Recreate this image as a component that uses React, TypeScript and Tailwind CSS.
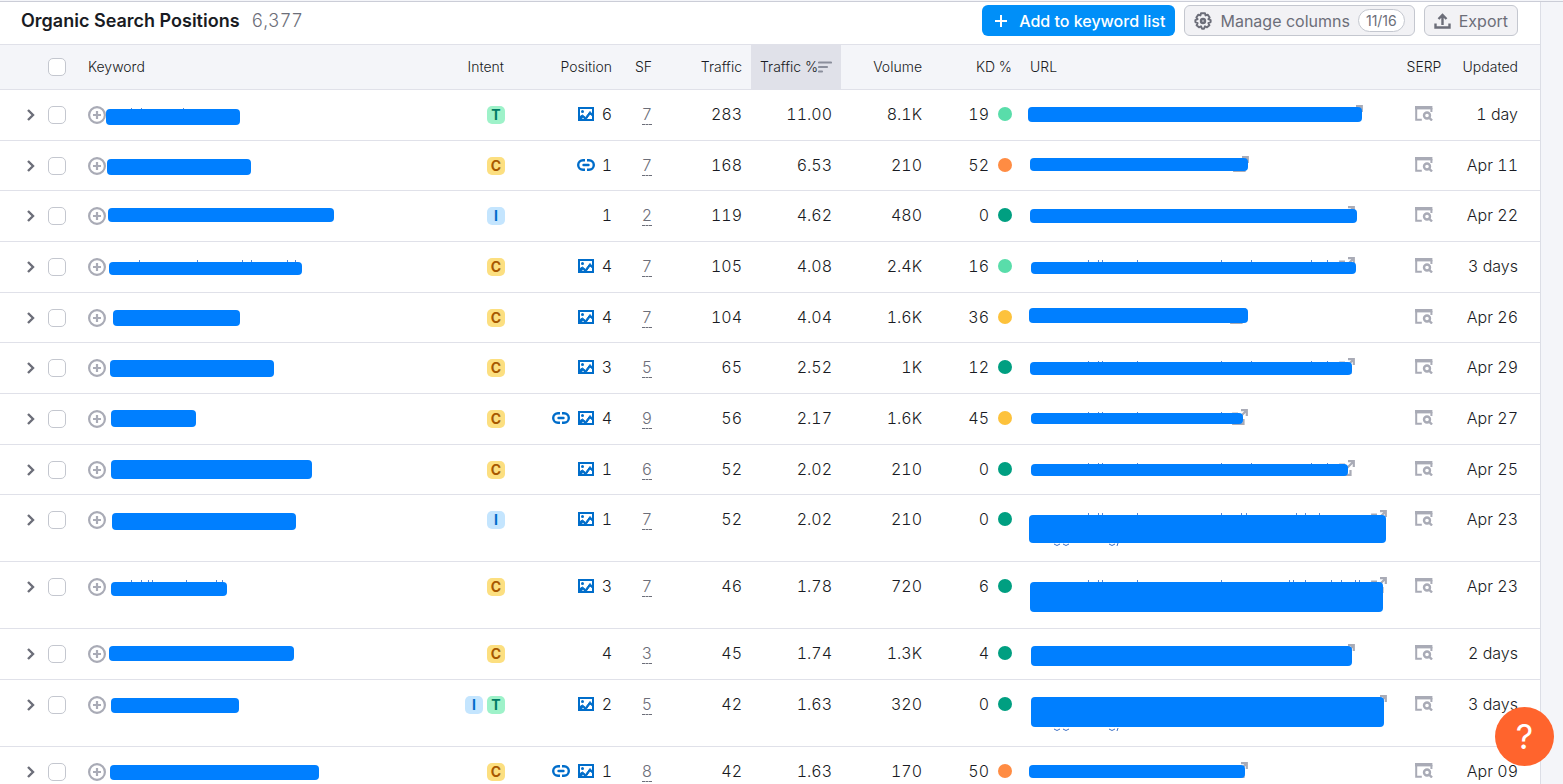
import { useState } from "react";
import clsx from "clsx";

type Intent = "T" | "C" | "I";
type PosIcon = "link" | "image";
type Level = "easy" | "veryEasy" | "possible" | "hard";

// x, y, width, height inside the cell
type Bar = [number, number, number, number];

type Row = {
  size: "sm" | "md" | "lg";
  intents: Intent[];
  icons: PosIcon[];
  position: number;
  sf: number;
  traffic: string;
  share: string;
  volume: string;
  kd: number;
  level: Level;
  updated: string;
  keywordBar: Bar;
  keywordMarks: number[];
  urlBar: Bar;
  urlWidth: number;
  urlMarks: number[];
  tail?: boolean;
};

const SHORT = [62, 72, 76, 111];
const LONG = [62, 72, 76, 111, 195, 225, 285, 301];

const ROWS: Row[] = [
  { size: "md", intents: ["T"], icons: ["image"], position: 6, sf: 7, traffic: "283", share: "11.00", volume: "8.1K", kd: 19, level: "easy", updated: "1 day", keywordBar: [18, 19, 134, 16], keywordMarks: [43, 53, 95], urlBar: [2, 17, 334, 15], urlWidth: 333, urlMarks: [] },
  { size: "sm", intents: ["C"], icons: ["link"], position: 1, sf: 7, traffic: "168", share: "6.53", volume: "210", kd: 52, level: "hard", updated: "Apr 11", keywordBar: [19, 18, 144, 16], keywordMarks: [43, 53, 61, 95], urlBar: [4, 17, 218, 13], urlWidth: 219, urlMarks: [...SHORT, 195] },
  { size: "md", intents: ["I"], icons: [], position: 1, sf: 2, traffic: "119", share: "4.62", volume: "480", kd: 0, level: "veryEasy", updated: "Apr 22", keywordBar: [20, 17, 226, 14], keywordMarks: [], urlBar: [4, 18, 327, 14], urlWidth: 325, urlMarks: LONG },
  { size: "md", intents: ["C"], icons: ["image"], position: 4, sf: 7, traffic: "105", share: "4.08", volume: "2.4K", kd: 16, level: "easy", updated: "3 days", keywordBar: [21, 20, 193, 13], keywordMarks: [51, 109, 154, 163, 199, 207], urlBar: [5, 20, 325, 12], urlWidth: 325, urlMarks: LONG },
  { size: "sm", intents: ["C"], icons: ["image"], position: 4, sf: 7, traffic: "104", share: "4.04", volume: "1.6K", kd: 36, level: "possible", updated: "Apr 26", keywordBar: [25, 17, 127, 16], keywordMarks: [], urlBar: [3, 15, 219, 15], urlWidth: 216, urlMarks: [] },
  { size: "md", intents: ["C"], icons: ["image"], position: 3, sf: 5, traffic: "65", share: "2.52", volume: "1K", kd: 12, level: "veryEasy", updated: "Apr 29", keywordBar: [22, 17, 164, 17], keywordMarks: [], urlBar: [4, 19, 322, 13], urlWidth: 325, urlMarks: LONG },
  { size: "md", intents: ["C"], icons: ["link", "image"], position: 4, sf: 9, traffic: "56", share: "2.17", volume: "1.6K", kd: 45, level: "possible", updated: "Apr 27", keywordBar: [23, 16, 85, 17], keywordMarks: [], urlBar: [5, 19, 212, 11], urlWidth: 218, urlMarks: [...SHORT, 195] },
  { size: "sm", intents: ["C"], icons: ["image"], position: 1, sf: 6, traffic: "52", share: "2.02", volume: "210", kd: 0, level: "veryEasy", updated: "Apr 25", keywordBar: [23, 15, 201, 19], keywordMarks: [], urlBar: [5, 19, 317, 12], urlWidth: 325, urlMarks: LONG },
  { size: "lg", intents: ["I"], icons: ["image"], position: 1, sf: 7, traffic: "52", share: "2.02", volume: "210", kd: 0, level: "veryEasy", updated: "Apr 23", keywordBar: [24, 18, 184, 17], keywordMarks: [], urlBar: [3, 20, 357, 28], urlWidth: 357, urlMarks: [...SHORT, 195, 215, 220, 270, 279, 293], tail: true },
  { size: "lg", intents: ["C"], icons: ["image"], position: 3, sf: 7, traffic: "46", share: "1.78", volume: "720", kd: 6, level: "veryEasy", updated: "Apr 23", keywordBar: [23, 20, 116, 14], keywordMarks: [43, 53, 60, 64, 98, 128, 134], urlBar: [4, 20, 353, 30], urlWidth: 357, urlMarks: [...SHORT, 195, 263, 267, 279, 305, 315, 329, 333] },
  { size: "md", intents: ["C"], icons: [], position: 4, sf: 3, traffic: "45", share: "1.74", volume: "1.3K", kd: 4, level: "veryEasy", updated: "2 days", keywordBar: [21, 17, 185, 15], keywordMarks: [], urlBar: [5, 17, 321, 20], urlWidth: 325, urlMarks: [] },
  { size: "lg", intents: ["I", "T"], icons: ["image"], position: 2, sf: 5, traffic: "42", share: "1.63", volume: "320", kd: 0, level: "veryEasy", updated: "3 days", keywordBar: [23, 18, 128, 15], keywordMarks: [43, 53, 112], urlBar: [5, 17, 353, 30], urlWidth: 357, urlMarks: [...SHORT, 195, 215, 220, 270, 279], tail: true },
  { size: "md", intents: ["C"], icons: ["link", "image"], position: 1, sf: 8, traffic: "42", share: "1.63", volume: "170", kd: 50, level: "hard", updated: "Apr 09", keywordBar: [22, 18, 209, 15], keywordMarks: [43, 53, 61, 96, 100, 132, 187], urlBar: [3, 18, 216, 13], urlWidth: 218, urlMarks: [...SHORT, 195] },
];

const ROW_SIZE = {
  sm: "h-[50px]",
  md: "h-[51px]",
  lg: "h-[67px]",
};

const INTENT_STYLE: Record<Intent, string> = {
  T: "bg-[#9ef2c9] text-[#007c65]",
  C: "bg-[#fcdf80] text-[#a75800]",
  I: "bg-[#c4e5fe] text-[#006dca]",
};

const LEVEL_STYLE: Record<Level, string> = {
  easy: "bg-[#59ddaa]",
  veryEasy: "bg-[#009f81]",
  possible: "bg-[#fdc23c]",
  hard: "bg-[#ff8c43]",
};

function ImageIcon() {
  return (
    <svg width="18" height="14" viewBox="0 0 18 14" fill="none" aria-hidden="true">
      <rect x="2" y="1" width="14" height="12" stroke="#006dca" strokeWidth="2" />
      <circle cx="5.5" cy="4.5" r="1.5" fill="#006dca" />
      <path d="M3 11V9.5l2.5-1.5 3 2.5L13 4.5 15 7v1.5l-2-1.5-4 5.5L6 10.5 4 12z" fill="#006dca" stroke="#006dca" />
    </svg>
  );
}

function LinkIcon() {
  return (
    <svg width="18" height="12" viewBox="0 0 18 12" fill="none" stroke="#006dca" strokeWidth="2.4" aria-hidden="true">
      <path d="M8 1.2H6a4.8 4.8 0 0 0 0 9.6h2M10 1.2h2a4.8 4.8 0 0 1 0 9.6h-2" />
      <path d="M6.5 6h5" strokeLinecap="round" />
    </svg>
  );
}

function GearIcon() {
  return (
    <svg width="18" height="18" viewBox="0 0 18 18" fill="none" stroke="#6c6e79" strokeWidth="2" strokeLinejoin="round" aria-hidden="true">
      <path d="M7 1.3h4l.6 2.1 2.2-.6 1.8 2.8-1.2 1.5 2.2 1v2l-2.2 1 1 2.2-2.4 2-2-.9-1 2.3H8l-1-2.3-2 .9-2.4-2 1-2.2-2.2-1v-2l2.2-1-1.2-1.5 1.8-2.8 2.2.6z" />
      <circle cx="9" cy="9" r="2" strokeWidth="2.4" />
    </svg>
  );
}

function ExportIcon() {
  return (
    <svg width="17" height="16" viewBox="0 0 17 16" fill="none" stroke="#6c6e79" strokeWidth="2.4" aria-hidden="true">
      <path d="M1.5 10.5v4h14v-4M8.5 12V2M4.5 6l4-4 4 4" />
    </svg>
  );
}

function SortIcon() {
  return (
    <svg width="14" height="12" viewBox="0 0 14 12" stroke="#8a8e9b" strokeWidth="2.2" strokeLinecap="round" aria-hidden="true">
      <path d="M1 1.5h12M1 6h8M1 10.5h3" />
    </svg>
  );
}

function AddIcon() {
  return (
    <svg width="18" height="18" viewBox="0 0 18 18" fill="none" stroke="#a9abb6" strokeWidth="2.2" aria-hidden="true">
      <circle cx="9" cy="9" r="7.9" />
      <path d="M5 9h8M9 5v8" />
    </svg>
  );
}

function ChevronIcon() {
  return (
    <svg width="8" height="12" viewBox="0 0 8 12" fill="none" stroke="#6c6e79" strokeWidth="2.4" aria-hidden="true">
      <path d="M1 1l5 5-5 5" />
    </svg>
  );
}

function SerpIcon() {
  return (
    <svg width="18" height="15" viewBox="0 0 18 15" fill="none" stroke="#a9abb6" strokeWidth="2.4" aria-hidden="true">
      <path d="M0 1.7h17.4" strokeWidth="3.4" />
      <path d="M1.2 2v11.8h5.6M16.4 2v4" strokeWidth="2" />
      <circle cx="12" cy="9.5" r="3" />
      <path d="M14 11.5l3 3" />
    </svg>
  );
}

function ExternalIcon() {
  return (
    <svg className="absolute right-0 top-[15px]" width="16" height="16" viewBox="0 0 16 16" fill="none" stroke="#a9abb6" strokeWidth="2.2" aria-hidden="true">
      <path d="M6 4.5H1.2v10.3h10.3V10" />
      <path d="M9 1.2h5.8V7M14.8 1.2L8 8" />
    </svg>
  );
}

function Marks({ xs, tail }: { xs: number[]; tail?: boolean }) {
  return (
    <svg className="absolute left-0 top-0" width="370" height="55" fill="none" stroke="#5b86cf" aria-hidden="true">
      {xs.map((x) => (
        <path key={x} d={`M${x + 0.5} 18v5`} />
      ))}
      {tail && <path stroke="#3b6fc4" d="M28 49q3 3 6 0M37 49q3 3 6 0M83 49q3 3 6 0M92 48l-1 3" />}
    </svg>
  );
}

function Redaction({ bar: [left, top, width, height] }: { bar: Bar }) {
  return <span className="absolute rounded-sm bg-[#007fff]" style={{ left, top, width, height }} />;
}

function Checkbox({ label }: { label: string }) {
  return (
    <input
      type="checkbox"
      aria-label={label}
      className="block size-[18px] appearance-none rounded-[5px] border border-[#c4c7cf] bg-white checked:bg-[#008ff8]"
    />
  );
}

function TableRow({ row, index }: { row: Row; index: number }) {
  const [open, setOpen] = useState(false);
  const cell = "border-b border-[#e0e1e9] p-0 align-top";
  const textCell = clsx(cell, "pt-3 text-right font-light");

  return (
    <tr className={ROW_SIZE[row.size]}>
      <td className={cell}>
        <button
          aria-label="Expand row"
          aria-expanded={open}
          onClick={() => setOpen(!open)}
          className="mt-[13px] flex h-6 w-full items-center justify-end pr-[13px]"
        >
          <ChevronIcon />
        </button>
      </td>
      <td className={clsx(cell, "pt-4")}>
        <Checkbox label={`Select row ${index + 1}`} />
      </td>
      <td className={cell}>
        <div className="relative pt-4">
          <button aria-label="Add keyword" className="block">
            <AddIcon />
          </button>
          <Marks xs={row.keywordMarks} />
          <Redaction bar={row.keywordBar} />
        </div>
      </td>
      <td className={clsx(cell, "pt-4 pr-2")}>
        <div className="flex justify-end gap-1">
          {row.intents.map((intent) => (
            <span
              key={intent}
              className={clsx("flex size-[18px] items-center justify-center rounded-[5px] text-sm font-bold", INTENT_STYLE[intent])}
            >
              {intent}
            </span>
          ))}
        </div>
      </td>
      <td className={clsx(textCell, "pr-[9px]")}>
        <div className="flex items-center justify-end gap-[7px]">
          {row.icons.map((icon) => (icon === "link" ? <LinkIcon key={icon} /> : <ImageIcon key={icon} />))}
          <span>{row.position}</span>
        </div>
      </td>
      <td className={clsx(textCell, "pr-2")}>
        <button className="inline-block h-[23px] border-b border-dashed border-[#6c6e79] align-top leading-6 text-[#6c6e79]">
          {row.sf}
        </button>
      </td>
      <td className={clsx(textCell, "pr-[9px]")}>{row.traffic}</td>
      <td className={clsx(textCell, "pr-[9px]")}>{row.share}</td>
      <td className={clsx(textCell, "pr-[9px]")}>{row.volume}</td>
      <td className={clsx(textCell, "pr-[14px]")}>
        <div className="flex items-center justify-end gap-[9px]">
          {row.kd}
          <span className={clsx("size-[14px] rounded-full", LEVEL_STYLE[row.level])} />
        </div>
      </td>
      <td className={cell}>
        <a href="#" aria-label="Open URL" className="relative block h-12">
          <Marks xs={row.urlMarks} tail={row.tail} />
          <span className="relative block h-12" style={{ width: row.urlWidth + 4 }}>
            <ExternalIcon />
          </span>
          <Redaction bar={row.urlBar} />
        </a>
      </td>
      <td className={cell}>
        <button aria-label="View SERP" className="flex w-full justify-center pt-4">
          <SerpIcon />
        </button>
      </td>
      <td className={clsx(textCell, "pr-[22px]")}>{row.updated}</td>
    </tr>
  );
}

export default function App() {
  const head = "border-b border-[#e0e1e9] p-0 font-light";

  return (
    <div className="h-screen overflow-hidden bg-[#f4f5f9] pt-px font-['Inter',sans-serif] text-[#191b23]">
      <div className="border-t border-[#cbcdd7]">
        <main className="mr-[22px] border-r border-[#dcdee6] bg-white">
          <header className="h-[43px] border-b border-[#e0e1e9] pr-[22px] pl-[21px] pt-[3px]">
            <div className="flex h-[31px] items-center justify-between">
              <h1 className="text-lg font-semibold">
                Organic Search Positions
                <span className="ml-3 font-light text-[#6c6e79] tabular-nums">6,377</span>
              </h1>
              <div className="flex h-full gap-[9px]">
                <button className="flex items-center gap-3 rounded-md bg-[#008ff8] pr-[10px] pl-[13px] font-medium text-white">
                  <svg width="12" height="12" viewBox="0 0 12 12" stroke="currentColor" strokeWidth="2" aria-hidden="true">
                    <path d="M0 6h12M6 0v12" />
                  </svg>
                  Add to keyword list
                </button>
                <button className="flex items-center gap-2 rounded-md border border-[#c4c7cf] bg-[#f2f2f5] px-[9px] text-[#6c6e79]">
                  <GearIcon />
                  Manage columns
                  <span className="flex h-[23px] items-center rounded-full border border-[#c4c7cf] bg-white px-[7px] text-sm">
                    11/16
                  </span>
                </button>
                <button className="flex items-center gap-2 rounded-md border border-[#c4c7cf] bg-[#f2f2f5] px-[9px] text-[#6c6e79]">
                  <ExportIcon />
                  Export
                </button>
              </div>
            </div>
          </header>

          <table className="w-full table-fixed border-separate border-spacing-0 tabular-nums">
            <colgroup>
              <col className="w-12" />
              <col className="w-10" />
              <col />
              <col className="w-[53px]" />
              <col className="w-[108px]" />
              <col className="w-[39px]" />
              <col className="w-[91px]" />
              <col className="w-[90px]" />
              <col className="w-[90px]" />
              <col className="w-[95px]" />
              <col />
              <col className="w-[52px]" />
              <col className="w-[90px]" />
            </colgroup>
            <thead>
              <tr className="h-[45px] bg-[#f4f5f9] text-right text-sm">
                <th className={head} />
                <th className={head}>
                  <Checkbox label="Select all rows" />
                </th>
                <th className={clsx(head, "text-left")}>Keyword</th>
                <th className={clsx(head, "pr-[9px]")}>Intent</th>
                <th className={clsx(head, "pr-[9px]")}>Position</th>
                <th className={clsx(head, "pr-2")}>SF</th>
                <th className={clsx(head, "pr-[9px]")}>Traffic</th>
                <th className={clsx(head, "bg-[#e0e1e9]")} aria-sort="descending">
                  <button className="flex items-center pl-[9px] whitespace-nowrap">
                    Traffic %<SortIcon />
                  </button>
                </th>
                <th className={clsx(head, "pr-[9px]")}>Volume</th>
                <th className={clsx(head, "pr-[14px]")}>KD %</th>
                <th className={clsx(head, "pl-1 text-left")}>URL</th>
                <th className={clsx(head, "text-center")}>SERP</th>
                <th className={clsx(head, "pr-[22px]")}>Updated</th>
              </tr>
            </thead>
            <tbody>
              {ROWS.map((row, i) => (
                <TableRow key={i} row={row} index={i} />
              ))}
            </tbody>
          </table>
        </main>
      </div>

      <button
        aria-label="Help"
        className="fixed right-[9px] bottom-[18px] flex size-[59px] items-center justify-center rounded-full bg-[#ff642d] text-[34px] text-white"
      >
        ?
      </button>
    </div>
  );
}
